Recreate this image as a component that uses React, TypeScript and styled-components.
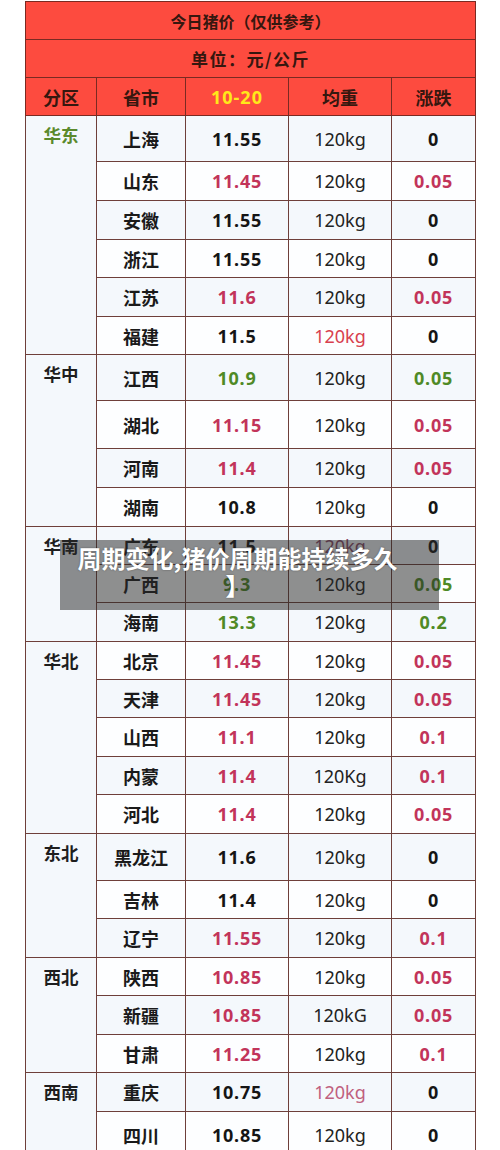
import React from 'react';
import styled, { createGlobalStyle } from 'styled-components';

type Tone = 'black' | 'red' | 'green' | 'pink' | 'plum' | 'rose';

type RowType = {
  city: string;
  price: string;
  priceTone?: Tone;
  weight?: string;
  weightTone?: Tone;
  change: string;
  changeTone?: Tone;
  height: number;
};

type RegionType = {
  name: string;
  green?: boolean;
  rows: RowType[];
};

const regions: RegionType[] = [
  {
    name: '华东',
    green: true,
    rows: [
      { city: '上海', price: '11.55', change: '0', height: 46 },
      { city: '山东', price: '11.45', priceTone: 'red', change: '0.05', changeTone: 'red', height: 39 },
      { city: '安徽', price: '11.55', change: '0', height: 39 },
      { city: '浙江', price: '11.55', change: '0', height: 38 },
      { city: '江苏', price: '11.6', priceTone: 'red', change: '0.05', changeTone: 'red', height: 39 },
      { city: '福建', price: '11.5', weightTone: 'rose', change: '0', height: 38 },
    ],
  },
  {
    name: '华中',
    rows: [
      { city: '江西', price: '10.9', priceTone: 'green', change: '0.05', changeTone: 'green', height: 46 },
      { city: '湖北', price: '11.15', priceTone: 'red', change: '0.05', changeTone: 'red', height: 48 },
      { city: '河南', price: '11.4', priceTone: 'red', change: '0.05', changeTone: 'red', height: 39 },
      { city: '湖南', price: '10.8', change: '0', height: 39 },
    ],
  },
  {
    name: '华南',
    rows: [
      { city: '广东', price: '11.5', weightTone: 'plum', change: '0', height: 38 },
      { city: '广西', price: '9.3', priceTone: 'green', change: '0.05', changeTone: 'green', height: 38 },
      { city: '海南', price: '13.3', priceTone: 'green', change: '0.2', changeTone: 'green', height: 39 },
    ],
  },
  {
    name: '华北',
    rows: [
      { city: '北京', price: '11.45', priceTone: 'red', change: '0.05', changeTone: 'red', height: 38 },
      { city: '天津', price: '11.45', priceTone: 'red', change: '0.05', changeTone: 'red', height: 38 },
      { city: '山西', price: '11.1', priceTone: 'red', change: '0.1', changeTone: 'red', height: 39 },
      { city: '内蒙', price: '11.4', priceTone: 'red', weight: '120Kg', change: '0.1', changeTone: 'red', height: 38 },
      { city: '河北', price: '11.4', priceTone: 'red', change: '0.05', changeTone: 'red', height: 39 },
    ],
  },
  {
    name: '东北',
    rows: [
      { city: '黑龙江', price: '11.6', change: '0', height: 47 },
      { city: '吉林', price: '11.4', change: '0', height: 38 },
      { city: '辽宁', price: '11.55', priceTone: 'red', change: '0.1', changeTone: 'red', height: 39 },
    ],
  },
  {
    name: '西北',
    rows: [
      { city: '陕西', price: '10.85', priceTone: 'red', change: '0.05', changeTone: 'red', height: 38 },
      { city: '新疆', price: '10.85', priceTone: 'red', weight: '120kG', change: '0.05', changeTone: 'red', height: 39 },
      { city: '甘肃', price: '11.25', priceTone: 'red', change: '0.1', changeTone: 'red', height: 38 },
    ],
  },
  {
    name: '西南',
    rows: [
      { city: '重庆', price: '10.75', weightTone: 'pink', change: '0', height: 39 },
      { city: '四川', price: '10.85', change: '0', height: 46 },
    ],
  },
];

const toneColor: Record<Tone, string> = {
  black: '#151515',
  red: '#c2345a',
  green: '#4f8a26',
  pink: '#c0607e',
  plum: '#8a4a6a',
  rose: '#d8404e',
};

export default function App() {
  let stripe = 0;
  return (
    <>
      <GlobalStyle />
      <Styled.Page>
        <Styled.Table>
          <colgroup>
            <col style={{ width: 71 }} />
            <col style={{ width: 89 }} />
            <col style={{ width: 103 }} />
            <col style={{ width: 103 }} />
            <col style={{ width: 84 }} />
          </colgroup>
          <thead>
            <Styled.HeadRow>
              <Styled.TitleCell colSpan={5}>今日猪价（仅供参考）</Styled.TitleCell>
            </Styled.HeadRow>
            <Styled.HeadRow>
              <Styled.TitleCell colSpan={5} $spaced>单位：元/公斤</Styled.TitleCell>
            </Styled.HeadRow>
            <Styled.HeadRow>
              <Styled.HeadCell>分区</Styled.HeadCell>
              <Styled.HeadCell>省市</Styled.HeadCell>
              <Styled.HeadCell $date>10-20</Styled.HeadCell>
              <Styled.HeadCell>均重</Styled.HeadCell>
              <Styled.HeadCell>涨跌</Styled.HeadCell>
            </Styled.HeadRow>
          </thead>
          <tbody>
            {regions.map((region) =>
              region.rows.map((row, index) => {
                stripe += 1;
                return (
                  <Styled.Row key={row.city} $height={row.height} $alt={stripe % 2 === 0}>
                    {index === 0 && (
                      <Styled.RegionCell rowSpan={region.rows.length} $green={region.green}>
                        {region.name}
                      </Styled.RegionCell>
                    )}
                    <Styled.CityCell>{row.city}</Styled.CityCell>
                    <Styled.NumCell $tone={row.priceTone ?? 'black'}>{row.price}</Styled.NumCell>
                    <Styled.WeightCell $tone={row.weightTone}>{row.weight ?? '120kg'}</Styled.WeightCell>
                    <Styled.NumCell $tone={row.changeTone ?? 'black'}>{row.change}</Styled.NumCell>
                  </Styled.Row>
                );
              })
            )}
          </tbody>
        </Styled.Table>
        <Styled.Caption>
          <Styled.CaptionLine>周期变化,猪价周期能持续多久</Styled.CaptionLine>
          <Styled.CaptionLine>】</Styled.CaptionLine>
        </Styled.Caption>
      </Styled.Page>
    </>
  );
}

const GlobalStyle = createGlobalStyle`
  html, body {
    margin: 0;
    padding: 0;
    background: #ffffff;
  }
  body {
    font-family: 'Noto Sans', 'Noto Sans CJK SC', sans-serif;
  }
`;

const Styled = {
  Page: styled.div`
    position: relative;
    width: 500px;
    height: 1150px;
    overflow: hidden;
    padding: 1px 25px 0;
    box-sizing: border-box;
  `,
  Table: styled.table`
    width: 450px;
    table-layout: fixed;
    border-collapse: collapse;
    border: 1.5px solid #6e3f3a;
  `,
  HeadRow: styled.tr`
    height: 38px;
    background: #fd4b3f;
  `,
  TitleCell: styled.th<{ $spaced?: boolean }>`
    border: 1.5px solid #7a2a22;
    padding: 0;
    text-align: center;
    font-family: 'Noto Sans CJK SC', sans-serif;
    font-size: ${(p) => (p.$spaced ? '17px' : '16px')};
    font-weight: 700;
    letter-spacing: ${(p) => (p.$spaced ? '1.5px' : '0')};
    color: #36170f;
  `,
  HeadCell: styled.th<{ $date?: boolean }>`
    border: 1.5px solid #7a2a22;
    padding: 0;
    text-align: center;
    font-family: ${(p) => (p.$date ? "'Noto Sans', sans-serif" : "'Noto Sans CJK SC', sans-serif")};
    font-size: 18px;
    font-weight: 700;
    letter-spacing: ${(p) => (p.$date ? '1px' : '0')};
    color: ${(p) => (p.$date ? '#ffe81a' : '#36170f')};
  `,
  Row: styled.tr<{ $height: number; $alt: boolean }>`
    height: ${(p) => p.$height}px;
    background: ${(p) => (p.$alt ? '#fdfeff' : '#f4f8fc')};
  `,
  RegionCell: styled.td<{ $green?: boolean }>`
    border: 1.5px solid #6e3f3a;
    background: #f4f8fc;
    vertical-align: top;
    text-align: center;
    padding: 6px 0 0;
    font-family: 'Noto Sans CJK SC', sans-serif;
    font-size: 17.5px;
    font-weight: 700;
    color: ${(p) => (p.$green ? '#5b8a2c' : '#1e1e1e')};
  `,
  CityCell: styled.td`
    border: 1.5px solid #6e3f3a;
    padding: 0;
    text-align: center;
    font-family: 'Noto Sans CJK SC', sans-serif;
    font-size: 18px;
    font-weight: 700;
    color: #1a1a1a;
  `,
  NumCell: styled.td<{ $tone: Tone }>`
    border: 1.5px solid #6e3f3a;
    padding: 0;
    text-align: center;
    font-family: 'Noto Sans', sans-serif;
    font-size: 18px;
    font-weight: 700;
    letter-spacing: 0.8px;
    color: ${(p) => toneColor[p.$tone]};
  `,
  WeightCell: styled.td<{ $tone?: Tone }>`
    border: 1.5px solid #6e3f3a;
    padding: 0;
    text-align: center;
    font-family: 'Noto Sans', sans-serif;
    font-size: 18px;
    font-weight: 400;
    color: ${(p) => (p.$tone ? toneColor[p.$tone] : '#222222')};
  `,
  Caption: styled.div`
    position: absolute;
    left: 60px;
    top: 540px;
    width: 379px;
    height: 70px;
    box-sizing: border-box;
    padding: 4px 24px 0 0;
    background: rgba(40, 40, 40, 0.52);
    display: flex;
    flex-direction: column;
    align-items: center;
  `,
  CaptionLine: styled.span`
    display: block;
    font-family: 'Noto Sans CJK SC', sans-serif;
    font-size: 24px;
    font-weight: 700;
    line-height: 27px;
    color: #ffffff;
    white-space: nowrap;
    text-shadow: 0 0 2px rgba(0, 0, 0, 0.4);
  `,
};
